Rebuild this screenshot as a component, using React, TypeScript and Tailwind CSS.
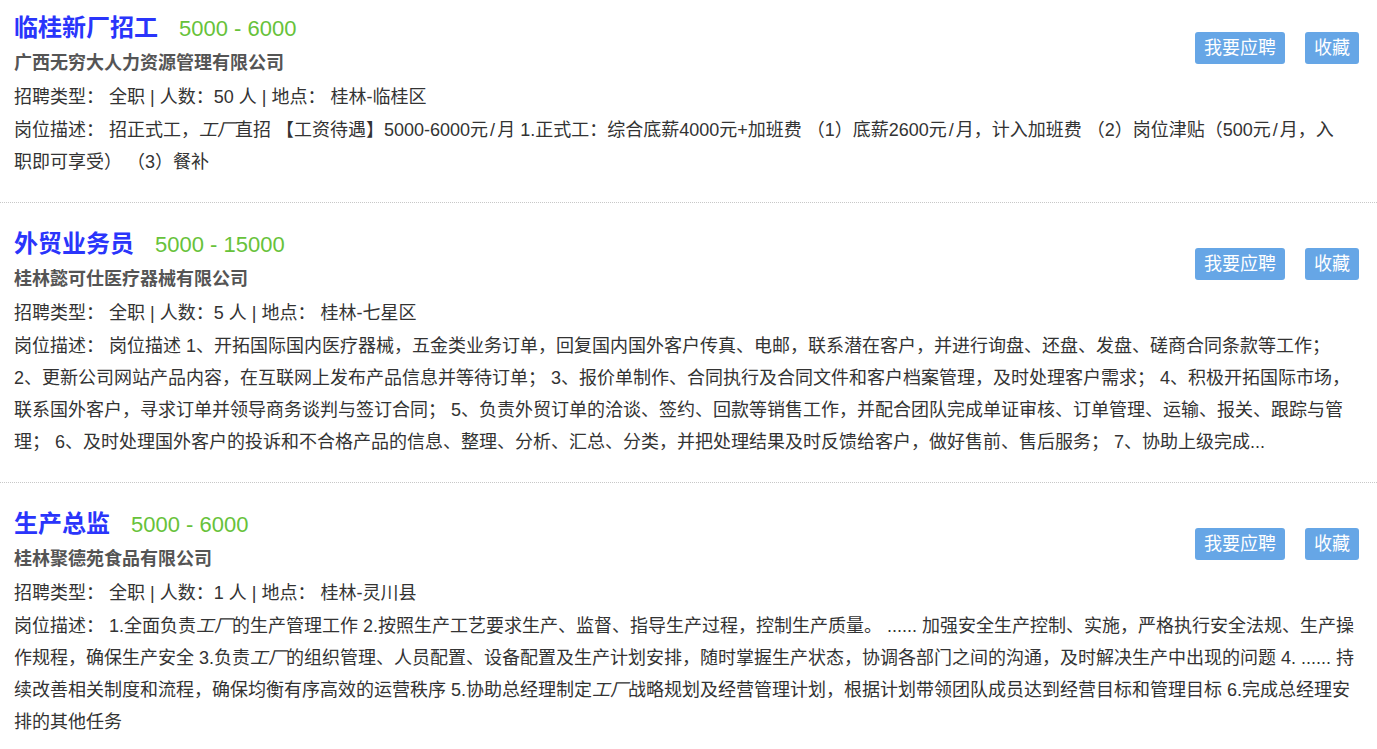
import React from 'react';

interface JobItem {
    title: string;
    salary: string;
    company: string;
    count: number;
    place: string;
    desc: React.ReactNode;
}

const Slash = () => <span className="px-[2px]">/</span>;

const jobs: JobItem[] = [
    {
        title: '临桂新厂招工',
        salary: '5000 - 6000',
        company: '广西无穷大人力资源管理有限公司',
        count: 50,
        place: '桂林-临桂区',
        desc: (
            <>
                招正式工，<em>工厂</em>直招 【工资待遇】5000-6000元<Slash />月 1.正式工：综合底薪4000元+加班费 （1）底薪2600元<Slash />月，计入加班费 （2）岗位津贴（500元<Slash />月，入职即可享受） （3）餐补
            </>
        )
    },
    {
        title: '外贸业务员',
        salary: '5000 - 15000',
        company: '桂林懿可仕医疗器械有限公司',
        count: 5,
        place: '桂林-七星区',
        desc: (
            <>
                岗位描述 1、开拓国际国内医疗器械，五金类业务订单，回复国内国外客户传真、电邮，联系潜在客户，并进行询盘、还盘、发盘、磋商合同条款等工作； 2、更新公司网站产品内容，在互联网上发布产品信息并等待订单； 3、报价单制作、合同执行及合同文件和客户档案管理，及时处理客户需求； 4、积极开拓国际市场，联系国外客户，寻求订单并领导商务谈判与签订合同； 5、负责外贸订单的洽谈、签约、回款等销售工作，并配合团队完成单证审核、订单管理、运输、报关、跟踪与管理； 6、及时处理国外客户的投诉和不合格产品的信息、整理、分析、汇总、分类，并把处理结果及时反馈给客户，做好售前、售后服务； 7、协助上级完成...
            </>
        )
    },
    {
        title: '生产总监',
        salary: '5000 - 6000',
        company: '桂林聚德苑食品有限公司',
        count: 1,
        place: '桂林-灵川县',
        desc: (
            <>
                1.全面负责<em>工厂</em>的生产管理工作 2.按照生产工艺要求生产、监督、指导生产过程，控制生产质量。 ...... 加强安全生产控制、实施，严格执行安全法规、生产操作规程，确保生产安全 3.负责<em>工厂</em>的组织管理、人员配置、设备配置及生产计划安排，随时掌握生产状态，协调各部门之间的沟通，及时解决生产中出现的问题 4. ...... 持续改善相关制度和流程，确保均衡有序高效的运营秩序 5.协助总经理制定<em>工厂</em>战略规划及经营管理计划，根据计划带领团队成员达到经营目标和管理目标 6.完成总经理安排的其他任务
            </>
        )
    }
];

export default function App() {
    return (
        <div
            className="min-h-screen bg-white text-[#333] text-[18px]"
            style={{ fontFamily: '"Liberation Sans", "Noto Sans CJK SC", sans-serif' }}
        >
            {jobs.map((job, i) => (
                <div
                    key={i}
                    className="px-[14px] pt-[23px] pb-[24px] border-b border-dotted border-[#c8c8c8] first:pt-[10px]"
                >
                    <div className="flex items-start justify-between pr-[4px]">
                        <div>
                            <div className="flex items-baseline h-[36px] leading-[36px]">
                                <span className="text-[24px] font-bold text-[#2a35fb]">{job.title}</span>
                                <span className="ml-[21px] text-[22px] text-[#67c23a]">{job.salary}</span>
                            </div>
                            <div className="h-[34px] leading-[34px] font-bold text-[#555]">{job.company}</div>
                        </div>
                        <div className="flex gap-5 mt-[22px]">
                            <button className="h-8 px-[9px] rounded-[3px] bg-[#66a6e6] text-white text-[18px]">
                                我要应聘
                            </button>
                            <button className="h-8 px-[9px] rounded-[3px] bg-[#66a6e6] text-white text-[18px]">
                                收藏
                            </button>
                        </div>
                    </div>
                    <div className="leading-[34px]">
                        招聘类型： 全职 | 人数：{job.count} 人 | 地点： 桂林-{job.place.replace('桂林-', '')}
                    </div>
                    <div className={i === 0 ? 'leading-[32px] pr-[16px]' : 'leading-[32px] pr-[4px]'}>
                        岗位描述： {job.desc}
                    </div>
                </div>
            ))}
        </div>
    );
}
